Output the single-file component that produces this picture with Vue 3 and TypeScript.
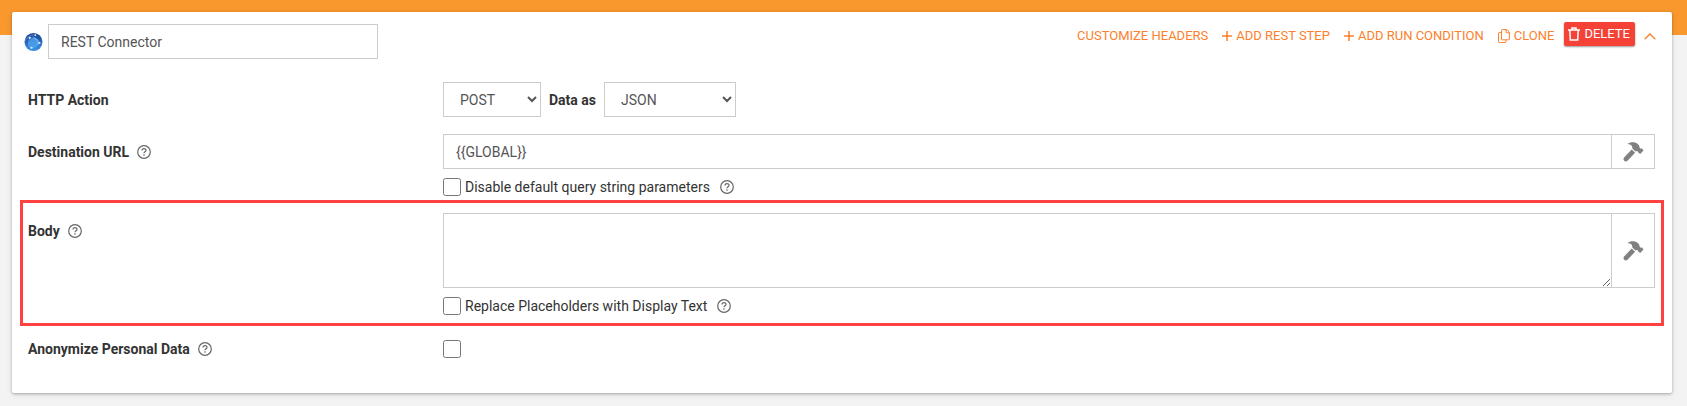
<script setup lang="ts">
import { ref } from 'vue'

const name = ref('REST Connector')
const method = ref('POST')
const format = ref('JSON')
const url = ref('{{GLOBAL}}')
const body = ref('')
const disableDefaults = ref(false)
const replacePlaceholders = ref(false)
const anonymize = ref(false)

const hammer =
  'M4.500 2C7.500-.2 12-.2 15 2.200c1 .8 1.600 2.200 1.700 3.800.8.800 1.500.8 2.200.3L20.500 8.500l-3.300 3.600-2-1.500c.1-1-.4-1.500-1.300-1.600L12.500 9.500 9.300 6.500c.2-1.700-.5-2.900-1.800-3.700C6.500 2.200 5.500 2 4.500 2ZM8.700 7.500l3.400 3.200-7.600 8.100c-2.200 1.900-5.300-1.100-3.400-3.300Z'
</script>

<template>
  <main class="page">
    <section class="card">
      <header class="header">
        <svg class="globe" viewBox="0 0 20 20" aria-hidden="true">
          <defs>
            <linearGradient id="globe-fill" x1="0" y1="0" x2="0" y2="1">
              <stop offset="0" stop-color="#123f94" />
              <stop offset="0.5" stop-color="#2468bd" />
              <stop offset="1" stop-color="#3d95ea" />
            </linearGradient>
          </defs>
          <circle cx="10" cy="10" r="9.500" fill="url(#globe-fill)" />
          <path d="M6 8c3-3 7-3 9 0 1 4-1 8-5 9-4-1-6-5-4-9Z" fill="#50a8f5" opacity=".75" />
          <g fill="none" stroke="#b9d9f7" stroke-width=".6" opacity=".7">
            <path d="M1 9C4 4 8 2 13 2M5 6c5-1 10 1 13 6M7 5c-3 4-3 8 0 12M9 4c4 2 6 5 6 10" />
          </g>
          <g fill="#e4f2ff">
            <circle cx="6" cy="5.500" r="1.100" />
            <circle cx="16" cy="11" r="1.100" />
            <circle cx="8" cy="16" r="1.100" />
            <circle cx="12" cy="3" r=".9" />
          </g>
        </svg>
        <input v-model="name" class="control name" type="text" aria-label="Connector name" />
        <nav class="actions">
          <a href="#">CUSTOMIZE HEADERS</a>
          <a href="#">
            <svg class="plus" viewBox="0 0 10 10" aria-hidden="true"><path d="M5 0v10M0 5h10" /></svg>
            ADD REST STEP
          </a>
          <a href="#">
            <svg class="plus" viewBox="0 0 10 10" aria-hidden="true"><path d="M5 0v10M0 5h10" /></svg>
            ADD RUN CONDITION
          </a>
          <a href="#">
            <svg class="copy" viewBox="0 0 12 14" aria-hidden="true">
              <path d="M3.500 3.500H1.200q-.7 0-.7.7v8.600q0 .7.7.7h6q.7 0 .7-.7v-1.700M4.200.6h4.600l2.600 2.600v6.900q0 .7-.7.7H4.200q-.7 0-.7-.7V1.300q0-.7.7-.7ZM8.200.8v3h3" />
            </svg>
            CLONE
          </a>
          <button class="delete" type="button">
            <svg class="trash" viewBox="0 0 12 14" aria-hidden="true">
              <path d="M0 3h12M4 2.800V1h4v1.800M1.800 3.200l.5 9.800h7.400l.5-9.800" />
            </svg>
            DELETE
          </button>
          <button class="collapse" type="button" aria-label="Collapse">
            <svg viewBox="0 0 12 7" aria-hidden="true"><path d="M.7 6.300 6 1l5.300 5.300" /></svg>
          </button>
        </nav>
      </header>

      <div class="row">
        <div class="label"><label for="method">HTTP Action</label></div>
        <div class="field inline">
          <select id="method" v-model="method" class="control method">
            <option>POST</option>
            <option>GET</option>
            <option>PUT</option>
            <option>DELETE</option>
          </select>
          <label class="strong" for="format">Data as</label>
          <select id="format" v-model="format" class="control format">
            <option>JSON</option>
            <option>XML</option>
          </select>
        </div>
      </div>

      <div class="row">
        <div class="label">
          <label for="url">Destination URL</label>
          <svg class="help" viewBox="0 0 14 14" aria-hidden="true">
            <circle cx="7" cy="7" r="6.300" />
            <path d="M5 5.600c0-2.600 4-2.500 4-.2 0 1.400-2 1.500-2 2.800M7 9.300v1.400" />
          </svg>
        </div>
        <div class="field">
          <div class="group">
            <input id="url" v-model="url" class="control grow" type="text" />
            <button class="tool" type="button" aria-label="Build URL">
              <svg viewBox="0 0 21 20" aria-hidden="true"><path :d="hammer" /></svg>
            </button>
          </div>
          <div class="check">
            <input id="defaults" v-model="disableDefaults" type="checkbox" />
            <label for="defaults">Disable default query string parameters</label>
            <svg class="help" viewBox="0 0 14 14" aria-hidden="true">
              <circle cx="7" cy="7" r="6.300" />
              <path d="M5 5.600c0-2.600 4-2.500 4-.2 0 1.400-2 1.500-2 2.800M7 9.300v1.400" />
            </svg>
          </div>
        </div>
      </div>

      <div class="highlight">
        <div class="row">
          <div class="label">
            <label for="body">Body</label>
            <svg class="help" viewBox="0 0 14 14" aria-hidden="true">
              <circle cx="7" cy="7" r="6.300" />
              <path d="M5 5.600c0-2.600 4-2.500 4-.2 0 1.400-2 1.500-2 2.800M7 9.300v1.400" />
            </svg>
          </div>
          <div class="field">
            <div class="group">
              <textarea id="body" v-model="body" class="control grow area"></textarea>
              <button class="tool" type="button" aria-label="Build body">
                <svg viewBox="0 0 21 20" aria-hidden="true"><path :d="hammer" /></svg>
              </button>
            </div>
            <div class="check">
              <input id="placeholders" v-model="replacePlaceholders" type="checkbox" />
              <label for="placeholders">Replace Placeholders with Display Text</label>
              <svg class="help" viewBox="0 0 14 14" aria-hidden="true">
                <circle cx="7" cy="7" r="6.300" />
                <path d="M5 5.600c0-2.600 4-2.500 4-.2 0 1.400-2 1.500-2 2.800M7 9.300v1.400" />
              </svg>
            </div>
          </div>
        </div>
      </div>

      <div class="row">
        <div class="label">
          <label for="anonymize">Anonymize Personal Data</label>
          <svg class="help" viewBox="0 0 14 14" aria-hidden="true">
            <circle cx="7" cy="7" r="6.300" />
            <path d="M5 5.600c0-2.600 4-2.500 4-.2 0 1.400-2 1.500-2 2.800M7 9.300v1.400" />
          </svg>
        </div>
        <div class="field inline">
          <input id="anonymize" v-model="anonymize" type="checkbox" />
        </div>
      </div>
    </section>
  </main>
</template>

<style>
body {
  background: #f3f3f3;
}
</style>

<style scoped>
* {
  box-sizing: border-box;
}

.page {
  padding: 12px 15px 13px 12px;
  background: linear-gradient(#f9982d 35px, #f3f3f3 35px);
  color: #333;
  font: 14px/20px Roboto, sans-serif;
}

.card {
  padding: 12px 0 27px;
  border-radius: 2px;
  background: #fff;
  box-shadow: 0 1px 3px rgba(0, 0, 0, 0.3), 0 2px 10px rgba(0, 0, 0, 0.06);
}

.header {
  display: flex;
  align-items: center;
  margin-bottom: 23px;
  padding: 0 16px 0 12px;
}

.globe {
  width: 19px;
  height: 20px;
  margin-right: 5px;
}

.control {
  height: 35px;
  margin: 0;
  padding: 0 12px;
  border: 1px solid #ccc;
  border-radius: 0;
  background: #fff;
  color: #555;
  font: inherit;
}

.name {
  width: 330px;
}

.actions {
  display: flex;
  flex: 1;
  align-items: center;
  justify-content: flex-end;
  align-self: flex-start;
  height: 24px;
  font-size: 14px;
}

.actions a {
  display: flex;
  align-items: center;
  gap: 4px;
  margin-right: 14px;
  color: #fb7f2d;
  font-size: 13px;
  text-decoration: none;
}

.actions svg {
  flex: none;
  fill: none;
  stroke: currentColor;
}

.plus {
  width: 10px;
  height: 10px;
  stroke-width: 1.500;
}

.copy {
  width: 12px;
  height: 14px;
}

.actions a:last-of-type {
  margin-right: 10px;
}

.actions .delete {
  display: flex;
  align-items: center;
  gap: 4px;
  height: 24px;
  margin: 0 9px 4px 0;
  padding: 0 5px 0 4px;
  border: 0;
  border-radius: 2px;
  background: #f44336;
  box-shadow: 0 1px 2px rgba(0, 0, 0, 0.4);
  color: #fff;
  font: 13px/20px Roboto, sans-serif;
}

.trash {
  width: 12px;
  height: 14px;
  stroke-width: 1.500;
}

.collapse {
  display: flex;
  padding: 0;
  border: 0;
  background: none;
  color: #fb7f2d;
}

.collapse svg {
  width: 12px;
  height: 7px;
  stroke-width: 1.300;
}

.row {
  display: grid;
  grid-template-columns: 25% 75%;
}

.row + .row {
  margin-top: 17px;
}

.label {
  display: flex;
  align-items: center;
  gap: 8px;
  height: 35px;
  padding: 0 16px;
  font-weight: 700;
}

.field {
  padding: 0 17px 0 16px;
}

.inline {
  display: flex;
  align-items: center;
  gap: 8px;
}

.strong {
  font-weight: 700;
}

.method {
  width: 98px;
}

.format {
  width: 132px;
}

.group {
  display: flex;
}

.grow {
  flex: 1;
  min-width: 0;
}

.area {
  display: block;
  height: 75px;
  padding: 8px 12px;
  resize: vertical;
}

.tool {
  display: flex;
  align-items: center;
  justify-content: center;
  width: 44px;
  margin-left: -1px;
  padding: 0;
  border: 1px solid #ccc;
  background: #fff;
}

.tool svg {
  width: 21px;
  height: 20px;
  fill: #808080;
}

.check {
  display: flex;
  align-items: center;
  height: 18px;
  margin-top: 9px;
}

input[type='checkbox'] {
  flex: none;
  width: 18px;
  height: 18px;
  margin: 0;
}

.check label {
  margin: 0 10px 0 4px;
}

.help {
  flex: none;
  width: 14px;
  height: 14px;
  fill: none;
  stroke: #666;
  stroke-width: 1.200;
}

.highlight {
  margin: 4px 8px 5px;
  padding: 10px 0 8px;
  border: 3px solid #ff4141;
}

.highlight .row {
  margin: 0 -11px;
}
</style>
